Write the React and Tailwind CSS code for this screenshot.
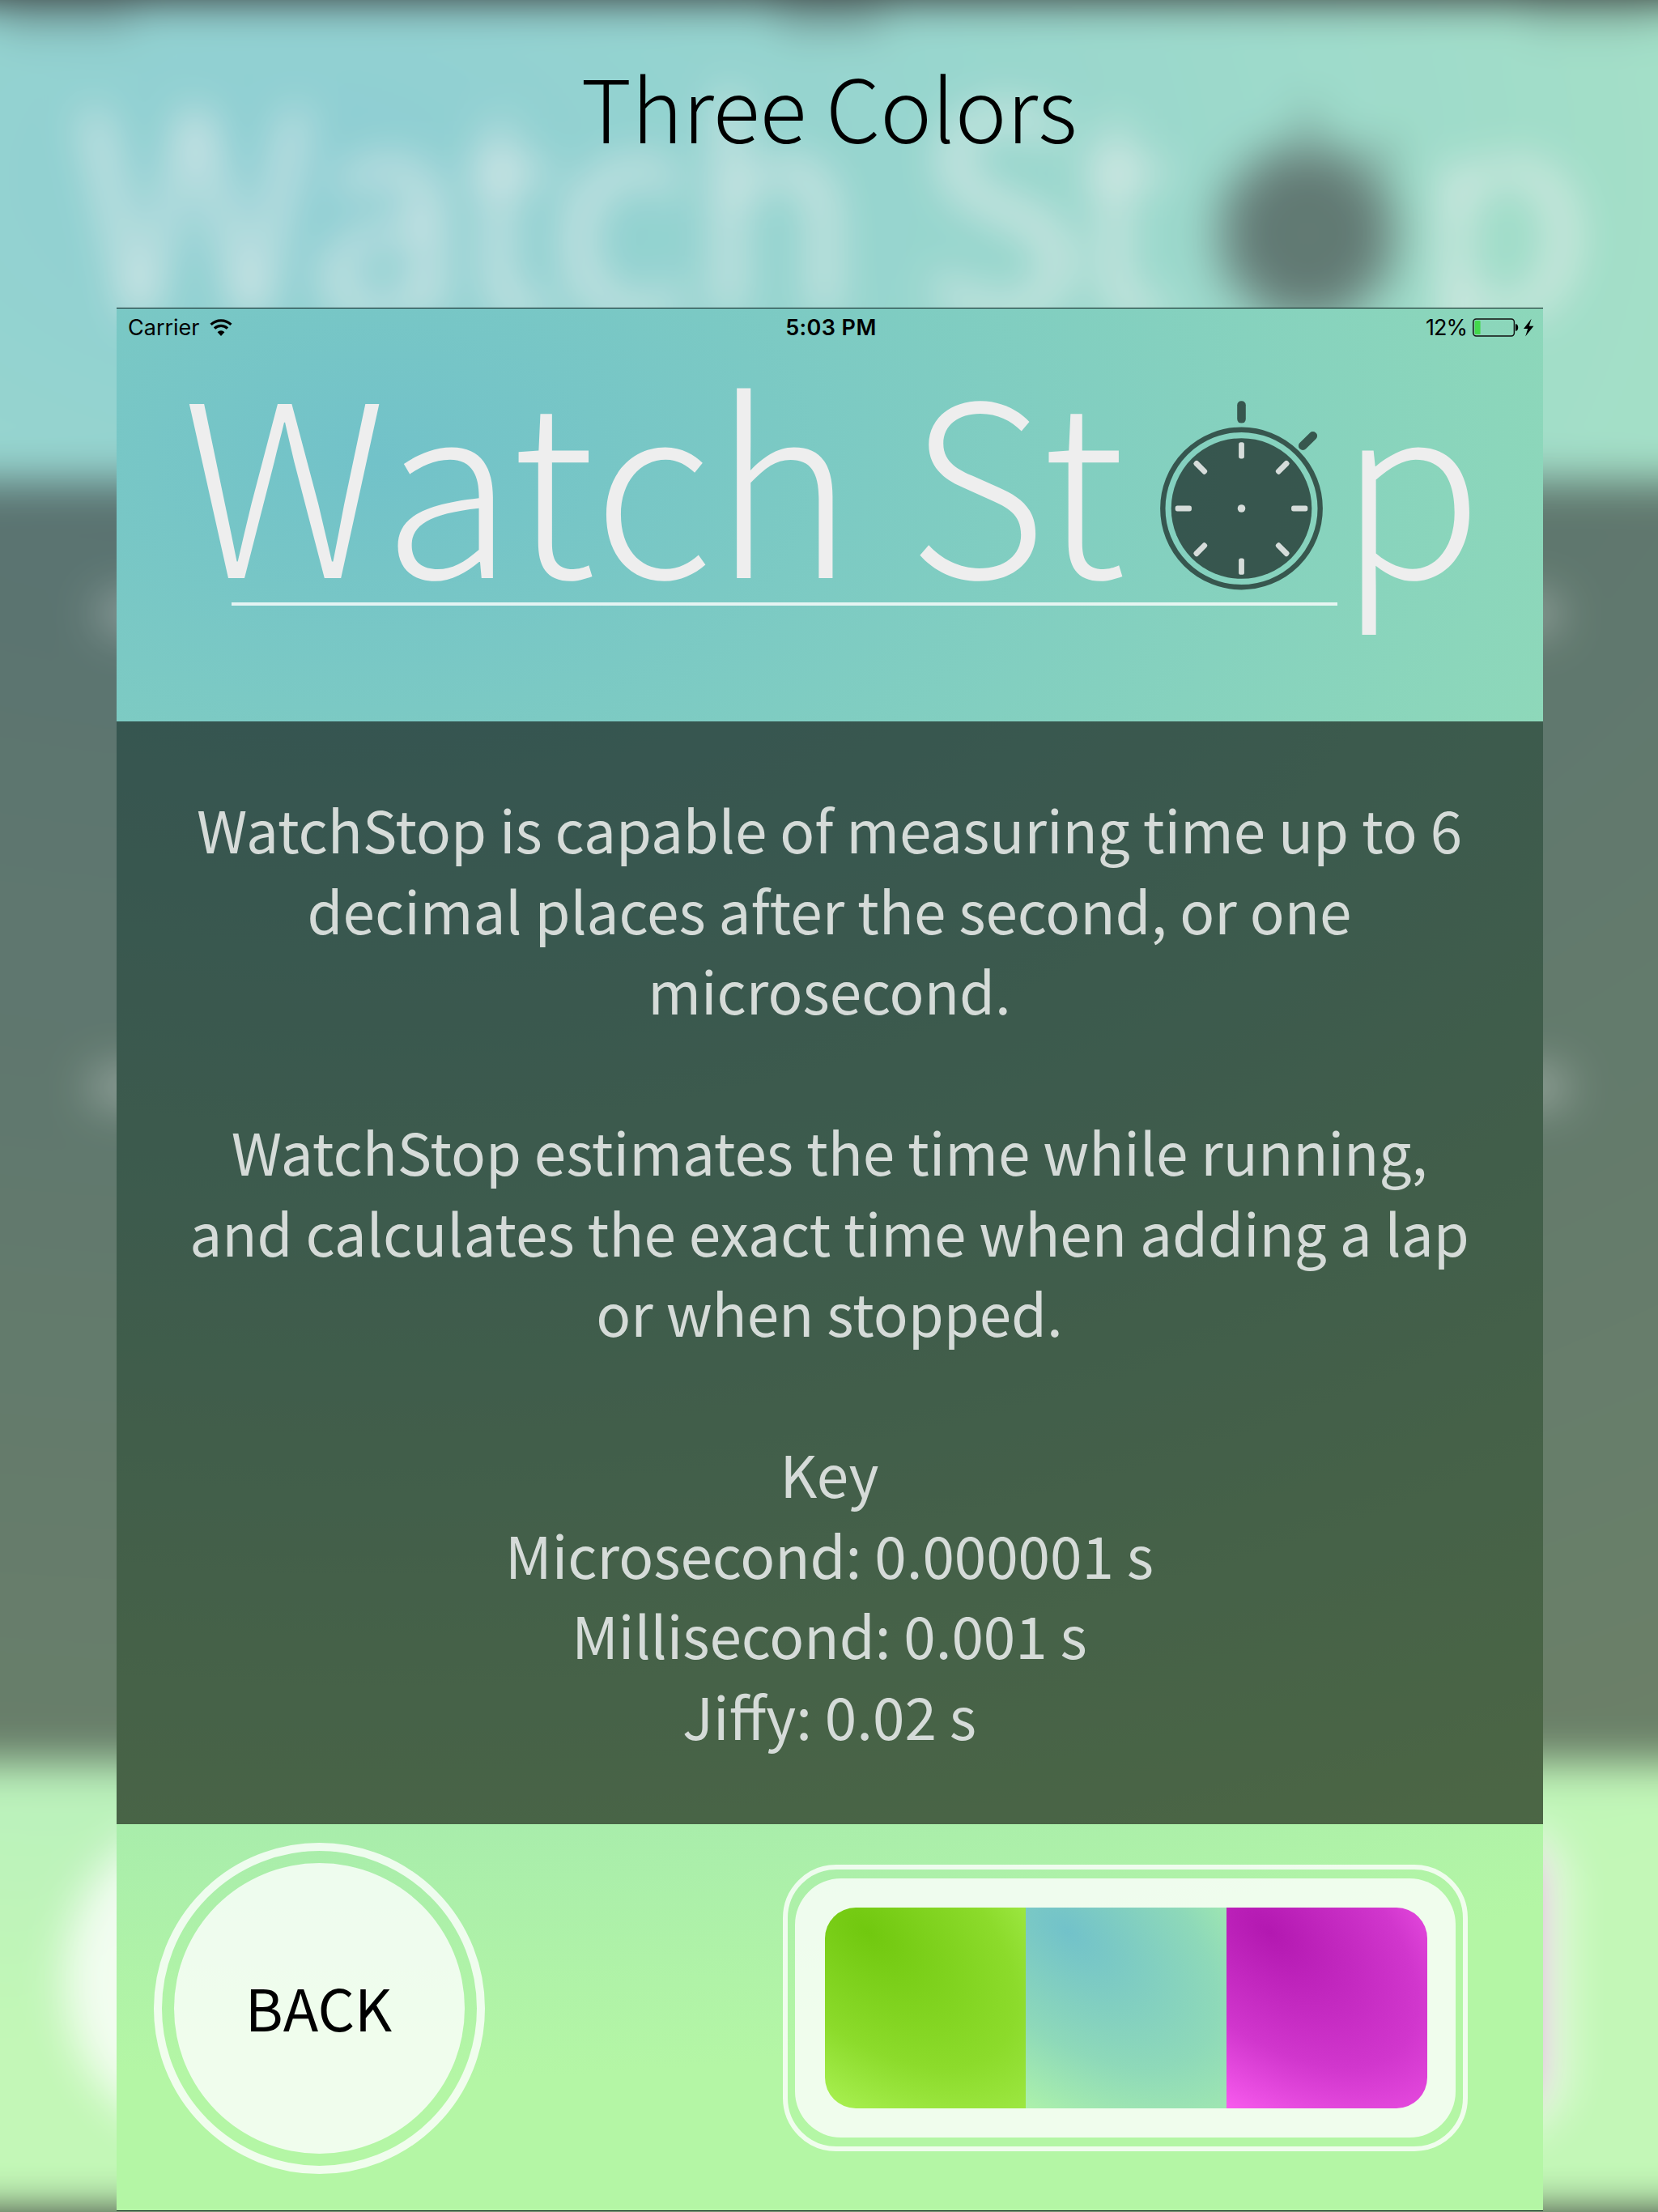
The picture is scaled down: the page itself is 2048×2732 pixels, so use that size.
const INTRO = [
  "WatchStop is capable of measuring time up to 6",
  "decimal places after the second, or one",
  "microsecond.",
];

const DETAIL = [
  "WatchStop estimates the time while running,",
  "and calculates the exact time when adding a lap",
  "or when stopped.",
];

const KEY = ["Key", "Microsecond: 0.000001 s", "Millisecond: 0.001 s", "Jiffy: 0.02 s"];

const SWATCHES = [
  { id: "green", from: "#71c80f", mid: "#8cdb2b", to: "#b0f65c" },
  { id: "blue", from: "#72c2ca", mid: "#8ed9b9", to: "#b2f6a8" },
  { id: "pink", from: "#b318b1", mid: "#d136cd", to: "#ff62f4" },
];

function Stopwatch() {
  return (
    <svg viewBox="-100.5 -133 201 234" className="h-[234px] w-[201px] shrink-0" aria-hidden="true">
      <g fill="#000" fillOpacity="0.59">
        <rect x="-5.3" y="-132.8" width="10.6" height="27.4" rx="5" />
        <rect x="-5.3" y="-14" width="10.6" height="28" rx="5" transform="translate(82 -83.5) rotate(45)" />
        <circle r="86.8" />
      </g>
      <circle r="97.2" fill="none" stroke="#000" strokeOpacity="0.59" strokeWidth="6.4" />
      <g fill="#d6dcda">
        {[0, 45, 90, 135, 180, 225, 270, 315].map((a) => (
          <rect key={a} x="-3.4" y="-81.8" width="6.8" height="20.2" rx="2.6" transform={`rotate(${a})`} />
        ))}
        <circle r="4.8" />
      </g>
    </svg>
  );
}

function Wordmark() {
  return (
    <div className="flex h-[295px] text-[295px] leading-none font-light text-[#eeeeee]">
      <span className="ml-[81px] w-[1208px] shrink-0 whitespace-nowrap tracking-[1px]">Watch St</span>
      <span className="mt-[57px] flex shrink-0">
        <Stopwatch />
      </span>
      <span className="ml-[19px]">p</span>
    </div>
  );
}

function StatusBar() {
  return (
    <div className="grid h-[47px] grid-cols-3 items-center pr-[11px] pl-[14px] font-['Inter',sans-serif] text-[27px] leading-none text-black">
      <div className="flex items-center">
        <span className="w-[101px]">Carrier</span>
        <svg viewBox="0 0 28 21" className="h-[21px] w-[28px]" fill="none" stroke="#000" aria-hidden="true">
          <path d="M1.6 6.9a17.6 17.6 0 0 1 24.8 0" strokeWidth="3.3" />
          <path d="M6 11.6a11.4 11.4 0 0 1 16 0" strokeWidth="3.3" />
          <path d="M9.6 16.2a6.2 6.2 0 0 1 8.8 0L14 21z" fill="#000" stroke="none" />
        </svg>
      </div>
      <div className="text-center font-semibold tracking-[0.4px]">5:03 PM</div>
      <div className="flex items-center justify-end">
        <span className="mr-[7px] tracking-[-1px]">12%</span>
        <svg viewBox="0 0 76 23" className="h-[23px] w-[76px]" aria-hidden="true">
          <rect x="0.8" y="1.1" width="50.6" height="20.8" rx="3.6" fill="none" stroke="#111" strokeWidth="1.5" />
          <rect x="2.6" y="3" width="7" height="17" rx="1" fill="#43d84b" />
          <path d="M53 7.2c2.4 0 3.2 2 3.2 4.3s-.8 4.3-3.2 4.3z" />
          <path d="M72.6.8 63 13h5.2l-3 9.6L75.4 9.8h-5.6z" />
        </svg>
      </div>
    </div>
  );
}

function Paragraph({ lines }) {
  return (
    <div>
      {lines.map((line) => (
        <p key={line} className="whitespace-nowrap">{line}</p>
      ))}
    </div>
  );
}

function Swatch({ id, from, mid, to }) {
  return (
    <svg viewBox="0 0 1 1" preserveAspectRatio="none" className="h-full flex-1" aria-hidden="true">
      <defs>
        <radialGradient
          id={id}
          gradientUnits="userSpaceOnUse"
          cx="0"
          cy="0"
          r="1"
          gradientTransform="translate(0.21 0.12) rotate(40) scale(1.75 0.98)"
        >
          <stop offset="0" stopColor={from} />
          <stop offset="0.5" stopColor={mid} />
          <stop offset="0.92" stopColor={to} />
        </radialGradient>
      </defs>
      <rect width="1" height="1" fill={`url(#${id})`} />
    </svg>
  );
}

function Backdrop() {
  return (
    <div className="absolute inset-0 overflow-hidden bg-black" aria-hidden="true">
      <div className="blur-[26px]">
        <div className="-ml-[116px] flex h-[2351px] w-[1962px] origin-top-left scale-[1.1623] flex-col bg-[radial-gradient(3200px_2000px_at_421px_187px,#72c2c9,#8fd9b9_50%,#b4f6a5)]">
          <div className="h-[511px] px-[100px]">
            <div className="flex h-[58px] justify-between pt-[4px]">
              <div className="h-[26px] w-[140px] bg-black/25" />
              <div className="h-[26px] w-[111px] bg-black/30" />
              <div className="h-[26px] w-[140px] bg-black/15" />
            </div>
            <Wordmark />
          </div>
          <div className="flex h-[1362px] flex-col items-center bg-black/60 pt-[118px]">
            <div className="h-[46px] w-[1558px] rounded-full bg-white/30" />
            <div className="mt-[457px] h-[46px] w-[1576px] rounded-full bg-white/30" />
          </div>
          <div className="flex flex-1 items-center pr-[199px] pb-[20px] pl-[168px]">
            <div className="size-[366px] rounded-full bg-white/80" />
            <div className="ml-auto flex h-[330px] w-[830px] items-center justify-end rounded-[64px] bg-white/70 pr-[40px]">
              <div className="h-[248px] w-[248px] bg-[#d336d0]" />
            </div>
          </div>
        </div>
      </div>
      <div className="absolute inset-0 bg-white/20" />
    </div>
  );
}

export default function App() {
  return (
    <div className="relative h-[2732px] w-[2048px] overflow-hidden font-['Noto_Sans_CJK_SC',sans-serif]">
      <Backdrop />
      <div className="relative flex flex-col">
        <h1 className="h-[380px] pt-[77px] text-center text-[107.4px] leading-none font-light text-black">
          Three Colors
        </h1>

        <main className="ml-[144px] flex h-[2351px] w-[1762px] flex-col border-y border-[#0c1f1f] bg-[radial-gradient(3200px_2000px_at_321px_187px,#72c2c9,#8fd9b9_50%,#b4f6a5)]">
          <header className="h-[510px] pb-[1px]">
            <StatusBar />
            <div className="mt-[10px]">
              <Wordmark />
            </div>
            <div className="mt-[11px] ml-[142px] h-[4px] w-[1366px] bg-white/80" />
          </header>

          <section className="flex h-[1362px] flex-col gap-[99.5px] bg-[#050300]/59 pt-[83px] pr-px text-center text-[71px] leading-[99.5px] text-[#d5dbd8]">
            <Paragraph lines={INTRO} />
            <Paragraph lines={DETAIL} />
            <Paragraph lines={KEY} />
          </section>

          <footer className="flex flex-1 items-start justify-between pt-[23px] pr-[93px] pl-[46px]">
            <button className="size-[409px] rounded-full border-[10.5px] border-white/80 p-[15px]">
              <span className="flex size-full items-center justify-center rounded-full bg-white/80 pr-[2px] pb-[4px] text-[71.5px] leading-none text-black">
                BACK
              </span>
            </button>
            <div className="mt-[27px] h-[354px] w-[846px] rounded-[66px] border-[6px] border-white/80 px-[9px] py-[11px]">
              <div className="flex size-full rounded-[57px] bg-white/80 py-[36px] pr-[35px] pl-[37px]">
                <div className="flex size-full overflow-hidden rounded-[38px]">
                  {SWATCHES.map((s) => (
                    <Swatch key={s.id} {...s} />
                  ))}
                </div>
              </div>
            </div>
          </footer>
        </main>
      </div>
    </div>
  );
}
